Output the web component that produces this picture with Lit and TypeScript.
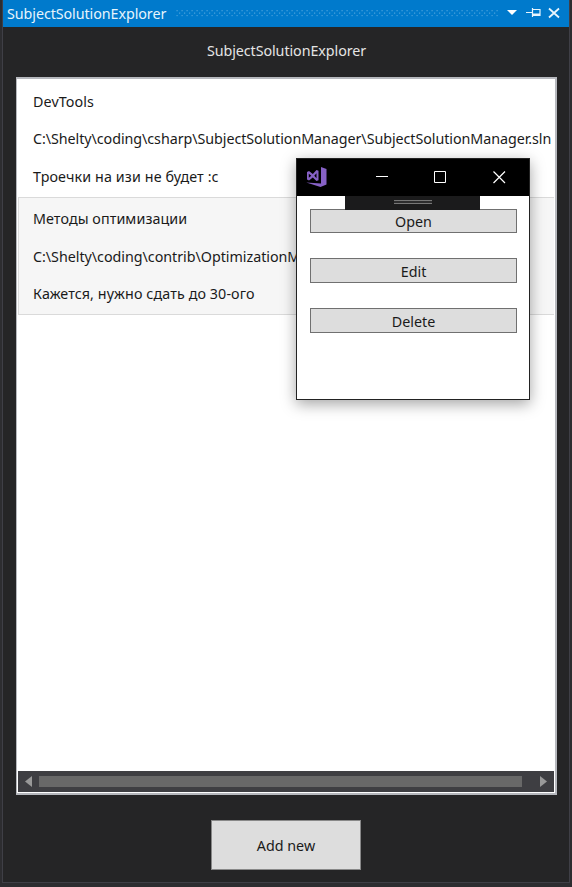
import { LitElement, html, css, svg } from "lit";
import { customElement, property } from "lit/decorators.js";

interface Solution {
  lines: { text: string; tracking: number }[];
  selected: boolean;
}

const solutions: Solution[] = [
  {
    selected: false,
    lines: [
      { text: "DevTools", tracking: 0.1 },
      { text: "C:\\Shelty\\coding\\csharp\\SubjectSolutionManager\\SubjectSolutionManager.sln", tracking: -0.06 },
      { text: "Троечки на изи не будет :c", tracking: 0.12 },
    ],
  },
  {
    selected: true,
    lines: [
      { text: "Методы оптимизации", tracking: 0.08 },
      { text: "C:\\Shelty\\coding\\contrib\\OptimizationM", tracking: -0.03 },
      { text: "Кажется, нужно сдать до 30-ого", tracking: 0.1 },
    ],
  },
];

@customElement("solution-item")
export class SolutionItem extends LitElement {
  @property({ attribute: false }) solution!: Solution;

  static styles = css`
    :host { display: block; }
    .item {
      box-sizing: border-box;
      height: 118px;
      padding: 3px 0 0 14px;
      border: 1px solid transparent;
      border-right: 0;
      overflow: hidden;
    }
    .selected { background: #f6f6f6; border-color: #dadada; padding-top: 2px; }
    .line { height: 37.4px; line-height: 37px; white-space: pre; }
    .selected .line:nth-child(2) { line-height: 39px; }
  `;

  render() {
    return html`<div class="item ${this.solution.selected ? "selected" : ""}">
      ${this.solution.lines.map(
        (l) => html`<div class="line" style="letter-spacing:${l.tracking}px">${l.text}</div>`
      )}
    </div>`;
  }
}

@customElement("action-window")
export class ActionWindow extends LitElement {
  static styles = css`
    :host {
      display: flex;
      flex-direction: column;
      box-sizing: border-box;
      width: 234px;
      height: 242px;
      background: #fff;
      border: 1px solid #222;
      box-shadow: 0 4px 14px rgba(0, 0, 0, 0.36);
    }
    .bar { flex: none; height: 37px; background: #000; }
    .bar svg { display: block; }
    .body { position: relative; display: flex; flex-direction: column; gap: 25px; padding: 13px 12px 0 13px; }
    .button {
      box-sizing: border-box;
      height: 25px;
      line-height: 25px;
      border: 1px solid #707070;
      background: #ddd;
      text-align: center;
    }
    .button:first-child { height: 24px; line-height: 24px; }
    .grip {
      position: absolute;
      left: 48px;
      top: 0;
      width: 135px;
      height: 14px;
      background: #1b1b1c;
      display: flex;
      justify-content: center;
    }
    .handle {
      box-sizing: border-box;
      width: 38px;
      height: 4px;
      margin-top: 4px;
      border: solid #777;
      border-width: 1px 0;
      background: #2c2c2d;
    }
  `;

  render() {
    return html`
      <div class="bar">
        ${svg`<svg width="232" height="37" viewBox="297 159 232 37" fill="none">
          <path fill="#8661c5" fill-rule="evenodd" d="M321 167L326.5 169V184.5L320.5 187L306.3 182.4L321 183.5ZM307 172L309 171L312.8 174L316.5 170L318.5 170.8V180.2L316.5 181L312.8 177.5L309 180.5L307 179.5ZM308.8 173.7V177.8L311.3 175.8ZM316.5 173.2L314.3 175.8L316.5 178.2Z"/>
          <path stroke="#fff" d="M376 176.5H388M434.5 171.5H445.5V182.5H434.5Z"/>
          <path stroke="#fff" stroke-width="1.2" d="M493.5 171.5L505 183M505 171.5L493.5 183"/>
        </svg>`}
      </div>
      <div class="body">
        <div class="button">Open</div>
        <div class="button">Edit</div>
        <div class="button">Delete</div>
        <div class="grip"><div class="handle"></div></div>
      </div>
    `;
  }
}

@customElement("app-root")
export class AppRoot extends LitElement {
  static styles = css`
    :host {
      display: block;
      position: relative;
      box-sizing: border-box;
      height: 887px;
      padding: 0 2px 4px;
      background: #2d2d30;
      overflow: hidden;
      font: 14.3px "Noto Sans", "Open Sans", sans-serif;
      color: #1a1a1a;
    }
    .panel {
      display: flex;
      flex-direction: column;
      box-sizing: border-box;
      height: 883px;
      background: #252526;
      border: 1px solid #3f3f46;
      border-top: 0;
    }
    .title {
      flex: none;
      display: flex;
      align-items: center;
      height: 27px;
      background: #007acc;
      color: #e6f4fc;
      padding-left: 4px;
    }
    .name { flex: none; width: 169px; }
    .dots { display: block; flex: none; }
    .heading { height: 50px; line-height: 47px; text-align: center; color: #e4e4e4; padding-left: 1px; }
    .heading, .name { letter-spacing: -0.07px; }
    .list {
      flex: none;
      display: flex;
      flex-direction: column;
      box-sizing: border-box;
      width: 541px;
      height: 718px;
      margin-left: 13px;
      border: 2px solid #b6b8bd;
      border-left-width: 1px;
      background: #fff;
      padding: 0 1px 1px;
    }
    .items { flex: 1; min-height: 0; overflow: hidden; }
    .scroll {
      flex: none;
      display: flex;
      align-items: center;
      height: 21px;
      background: #3e3e42;
    }
    .arrow { display: block; flex: none; width: 21px; height: 21px; }
    .thumb { width: 483px; height: 11px; background: #686868; }
    .spacer { flex: 1; }
    .add {
      flex: none;
      align-self: center;
      box-sizing: border-box;
      width: 150px;
      height: 50px;
      margin: 25px 1px 0 0;
      padding-left: 1px;
      border: 1px solid #888;
      background: #ddd;
      line-height: 49px;
      text-align: center;
    }
    action-window { position: absolute; left: 296px; top: 158px; }
  `;

  render() {
    return html`
      <div class="panel">
        <div class="title">
          <div class="name">SubjectSolutionExplorer</div>
          ${svg`<svg class="dots" width="393" height="27" viewBox="176 0 393 27" fill="none">
            <defs><pattern id="d" x="176" y="10" width="5" height="5" patternUnits="userSpaceOnUse">
              <path fill="#46a0dc" d="M0.5 0h1.2v1.2h-1.2zM3 2.5h1.2v1.2h-1.2z"/>
            </pattern></defs>
            <path fill="url(#d)" d="M176 10h322v6.5H176z"/>
            <path fill="#fff" d="M507 10h10l-5 5z"/>
            <path stroke="#e8f5fd" stroke-width="1.2" d="M526 12.5h6M532.5 8v9M533 9.5h7v6h-7"/>
            <path fill="#e8f5fd" d="M533 13.5h7v2h-7z"/>
            <path stroke="#e8f5fd" stroke-width="1.8" d="M549 8.5l10 9M559 8.5l-10 9"/>
          </svg>`}
        </div>
        <div class="heading"><span>SubjectSolutionExplorer</span></div>
        <div class="list">
          <div class="items">
            ${solutions.map((s) => html`<solution-item .solution=${s}></solution-item>`)}
          </div>
          <div class="scroll">
            <svg class="arrow" viewBox="0 0 21 21"><path fill="#999" d="M14 5v11L7 10.5z" /></svg>
            <div class="thumb"></div>
            <div class="spacer"></div>
            <svg class="arrow" viewBox="0 0 21 21"><path fill="#999" d="M7 5v11l7-5.5z" /></svg>
          </div>
        </div>
        <div class="add">Add new</div>
      </div>
      <action-window></action-window>
    `;
  }
}
